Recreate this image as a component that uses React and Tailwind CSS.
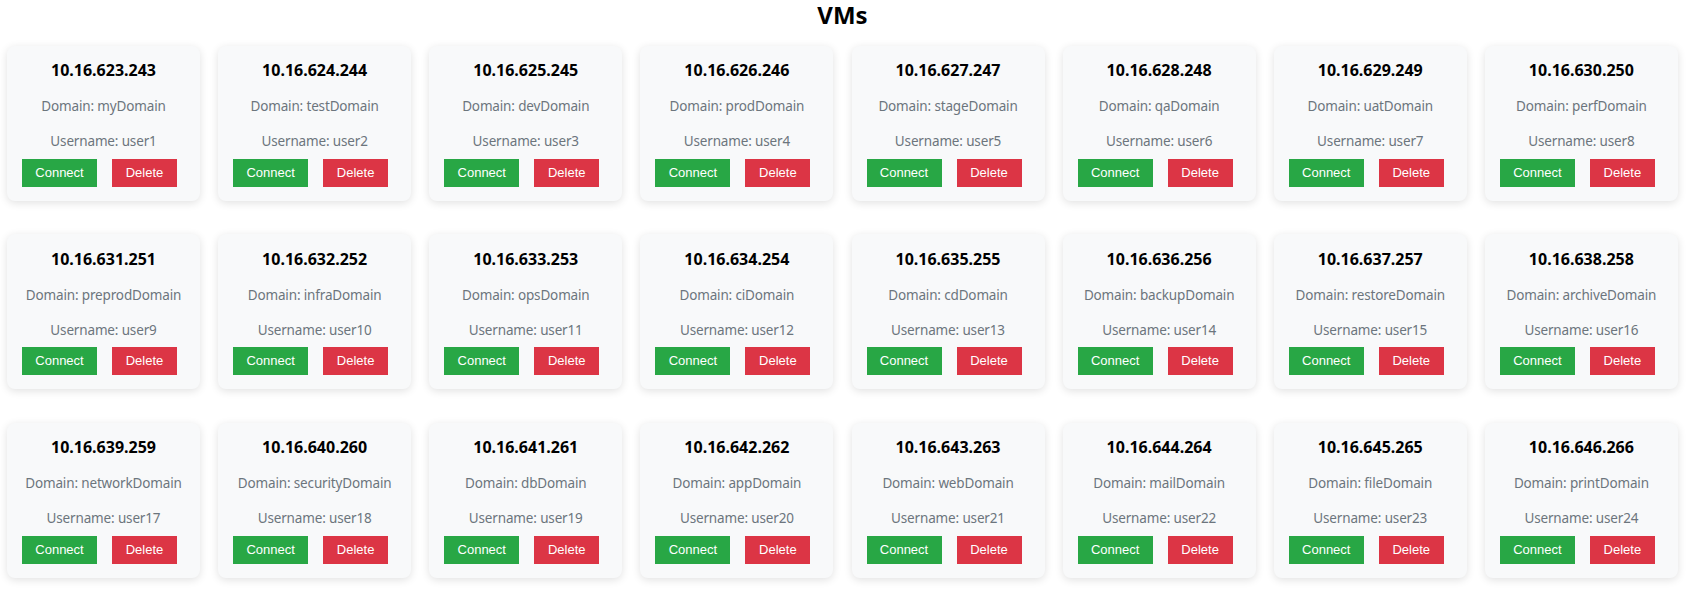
import React from "react";

const domains = [
  "myDomain", "testDomain", "devDomain", "prodDomain", "stageDomain", "qaDomain", "uatDomain", "perfDomain",
  "preprodDomain", "infraDomain", "opsDomain", "ciDomain", "cdDomain", "backupDomain", "restoreDomain", "archiveDomain",
  "networkDomain", "securityDomain", "dbDomain", "appDomain", "webDomain", "mailDomain", "fileDomain", "printDomain",
];

const vms = domains.map((d, i) => ({
  ip: `10.16.${623 + i}.${243 + i}`,
  domain: d,
  user: `user${i + 1}`,
}));

function Card({ vm }) {
  return (
    <div className="w-[193px] h-[155px] rounded-[8px] bg-[#f8f9fa] shadow-[0_2px_8px_rgba(0,0,0,0.12)] pt-[14.5px] flex flex-col">
      <div className="text-center text-[16px] leading-[20px] font-bold text-black">{vm.ip}</div>
      <div className="mt-[16px] text-center text-[13.5px] leading-[20px] tracking-[-0.15px] text-[#6c757d]">Domain: {vm.domain}</div>
      <div className="mt-[14.7px] text-center text-[13.5px] leading-[20px] tracking-[-0.15px] text-[#6c757d]">Username: {vm.user}</div>
      <div className="mt-[7.8px] flex pl-[15px] gap-[15px]">
        <button className="w-[75px] h-[28px] bg-[#28a745] text-white text-[13px] leading-[28px] text-center font-['Liberation_Sans',Arial,sans-serif]">
          Connect
        </button>
        <button className="w-[65px] h-[28px] bg-[#dc3545] text-white text-[13px] leading-[28px] text-center font-['Liberation_Sans',Arial,sans-serif]">
          Delete
        </button>
      </div>
    </div>
  );
}

export default function App() {
  return (
    <div className="w-[1685px] bg-white font-['Noto_Sans',sans-serif] pt-[0.7px] pb-[14px]">
      <h1 className="text-center text-[24px] leading-[28px] font-bold text-black">VMs</h1>
      <div className="mt-[17.3px] pl-[7px] grid grid-cols-[repeat(8,193px)] gap-x-[18.14px] gap-y-[33.4px]">
        {vms.map((vm) => (
          <Card key={vm.ip} vm={vm} />
        ))}
      </div>
    </div>
  );
}
